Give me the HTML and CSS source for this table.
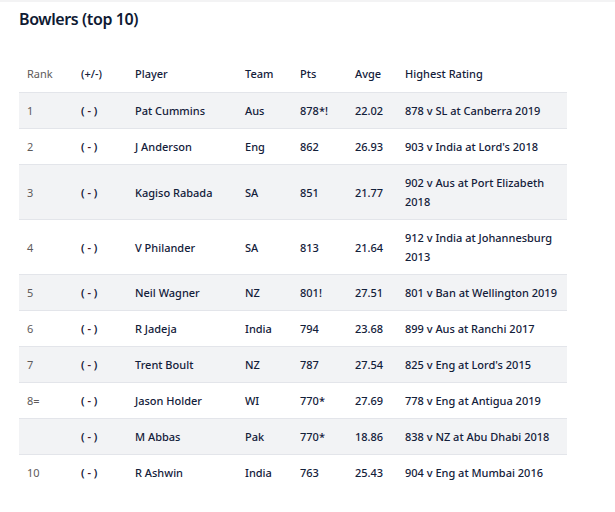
FILE: index.html
```html
<!DOCTYPE html>
<html>
<head>
<meta charset="utf-8">
<link rel="stylesheet" href="styles.css">
</head>
<body>
<div class="page">
  <h2 class="title">Bowlers (top 10)</h2>
  <table class="rank-table">
    <colgroup>
      <col class="c-rank"><col class="c-move"><col class="c-player"><col class="c-team"><col class="c-pts"><col class="c-avge"><col class="c-high">
    </colgroup>
    <thead>
      <tr><th class="rank">Rank</th><th>(+/-)</th><th>Player</th><th>Team</th><th>Pts</th><th>Avge</th><th>Highest Rating</th></tr>
    </thead>
    <tbody>
      <tr><td class="rank">1</td><td class="move">( <span class="dash">-</span> )</td><td>Pat Cummins</td><td>Aus</td><td>878*!</td><td>22.02</td><td>878 v SL at Canberra 2019</td></tr>
      <tr><td class="rank">2</td><td class="move">( <span class="dash">-</span> )</td><td>J Anderson</td><td>Eng</td><td>862</td><td>26.93</td><td>903 v India at Lord's 2018</td></tr>
      <tr><td class="rank">3</td><td class="move">( <span class="dash">-</span> )</td><td>Kagiso Rabada</td><td>SA</td><td>851</td><td>21.77</td><td>902 v Aus at Port Elizabeth 2018</td></tr>
      <tr><td class="rank">4</td><td class="move">( <span class="dash">-</span> )</td><td>V Philander</td><td>SA</td><td>813</td><td>21.64</td><td>912 v India at Johannesburg 2013</td></tr>
      <tr><td class="rank">5</td><td class="move">( <span class="dash">-</span> )</td><td>Neil Wagner</td><td>NZ</td><td>801!</td><td>27.51</td><td>801 v Ban at Wellington 2019</td></tr>
      <tr><td class="rank">6</td><td class="move">( <span class="dash">-</span> )</td><td>R Jadeja</td><td>India</td><td>794</td><td>23.68</td><td>899 v Aus at Ranchi 2017</td></tr>
      <tr><td class="rank">7</td><td class="move">( <span class="dash">-</span> )</td><td>Trent Boult</td><td>NZ</td><td>787</td><td>27.54</td><td>825 v Eng at Lord's 2015</td></tr>
      <tr><td class="rank">8=</td><td class="move">( <span class="dash">-</span> )</td><td>Jason Holder</td><td>WI</td><td>770*</td><td>27.69</td><td>778 v Eng at Antigua 2019</td></tr>
      <tr><td class="rank"></td><td class="move">( <span class="dash">-</span> )</td><td>M Abbas</td><td>Pak</td><td>770*</td><td>18.86</td><td>838 v NZ at Abu Dhabi 2018</td></tr>
      <tr><td class="rank">10</td><td class="move">( <span class="dash">-</span> )</td><td>R Ashwin</td><td>India</td><td>763</td><td>25.43</td><td>904 v Eng at Mumbai 2016</td></tr>
    </tbody>
  </table>
</div>
</body>
</html>
```
FILE: styles.css
```css
html, body {
  margin: 0;
  padding: 0;
  background: #fff;
}
body {
  font-family: "Noto Sans", "Open Sans", sans-serif;
  color: #13203a;
  border-top: 2px solid #f3f3f4;
}
.page {
  padding: 7px 48px 0 19px;
}
.title {
  margin: 0;
  font-size: 16px;
  line-height: 20px;
  font-weight: 600;
  letter-spacing: -0.4px;
  color: #0f1a33;
}
.rank-table {
  margin-top: 27px;
  width: 548px;
  border-collapse: collapse;
  table-layout: fixed;
  font-size: 11px;
  font-weight: 500;
}
.c-rank { width: 54px; }
.c-move { width: 54px; }
.c-player { width: 110px; }
.c-team { width: 55px; }
.c-pts { width: 55px; }
.c-avge { width: 50px; }
.c-high { width: 170px; }
th, td {
  text-align: left;
  padding: 8px 8px;
  line-height: 19px;
  vertical-align: middle;
}
th {
  font-weight: 500;
  padding-bottom: 9px;
}
tbody tr {
  border-top: 1px solid #e3e5ea;
}
tbody tr:nth-child(odd) {
  background: #f2f3f5;
}
.rank {
  color: #5e5a5a;
  font-weight: 400;
}
.move {
  font-weight: 600;
}
.dash {
  color: #4a1a2a;
}
```
